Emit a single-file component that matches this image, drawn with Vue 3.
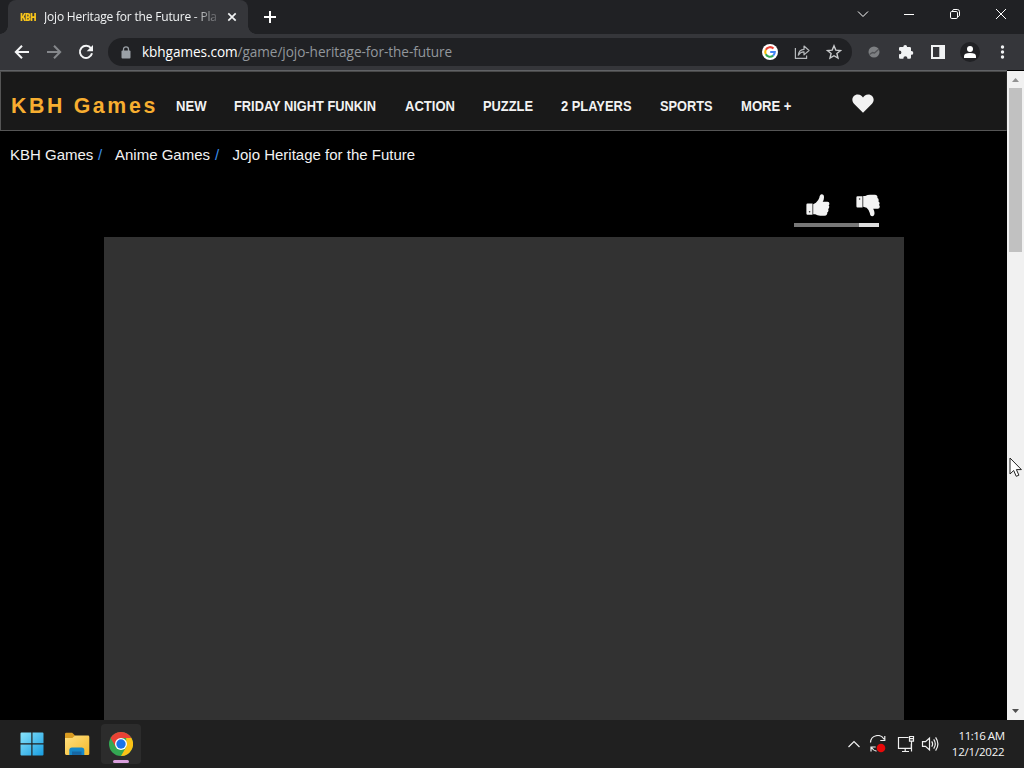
<script setup>
const nav = [
  { label: 'NEW', w: 30.5 },
  { label: 'FRIDAY NIGHT FUNKIN', w: 142 },
  { label: 'ACTION', w: 50 },
  { label: 'PUZZLE', w: 50 },
  { label: '2 PLAYERS', w: 70.5 },
  { label: 'SPORTS', w: 52.5 },
  { label: 'MORE +', w: 50.5 }
]
</script>

<template>
  <div class="desktop">
    <header class="tabs">
      <div class="tab">
        <span class="favicon">KBH</span>
        <span class="tab-title">Jojo Heritage for the Future - Pla</span>
        <svg class="tab-close" width="10" height="10" viewBox="0 0 10 10"><path d="M1.3 1.3l7.4 7.4M8.7 1.3L1.3 8.7" stroke="#f1f3f4" stroke-width="1.7" /></svg>
      </div>
      <svg class="new-tab" width="14" height="14" viewBox="0 0 14 14"><path d="M7 1v12M1 7h12" stroke="#fff" stroke-width="2" /></svg>
      <div class="window-controls">
        <svg width="12" height="12" viewBox="0 0 12 12"><path d="M1 3.5l5 5 5-5" /></svg>
        <svg width="12" height="12" viewBox="0 0 12 12"><path d="M1 6.5h10" /></svg>
        <svg width="12" height="12" viewBox="0 0 12 12"><rect x="1.5" y="3.5" width="7" height="7" rx="1.3" /><path d="M3.5 3V2.8Q3.8 1.5 5 1.5h3.3q2.2 0 2.2 2.2V7q0 1.2-1.3 1.7" /></svg>
        <svg width="12" height="12" viewBox="0 0 12 12"><path d="M1 1l10 10M11 1L1 11" /></svg>
      </div>
    </header>

    <div class="toolbar">
      <div class="history">
        <svg width="16" height="16" viewBox="0 0 16 16"><path d="M15 8H2.2M8 1.7L1.8 8 8 14.3" fill="none" stroke="#f4f5f6" stroke-width="2" /></svg>
        <svg width="16" height="16" viewBox="0 0 16 16"><path d="M1 8h12.8M8 1.7L14.2 8 8 14.3" fill="none" stroke="#85878b" stroke-width="2" /></svg>
        <svg width="16" height="16" viewBox="0 0 16 16"><path d="M13 4.3A6.1 6.1 0 1 0 14 9.3" fill="none" stroke="#f4f5f6" stroke-width="2" /><path d="M15 1v6.3H8.7z" fill="#f4f5f6" /></svg>
      </div>
      <div class="address">
        <svg class="lock" width="10" height="13" viewBox="0 0 10 13"><rect x=".5" y="4.5" width="9" height="8" rx="1" fill="#9aa0a6" /><path d="M2.5 5V3.3a2.5 2.5 0 0 1 5 0V5" fill="none" stroke="#9aa0a6" stroke-width="1.3" /></svg>
        <span class="url"><b>kbhgames.com</b>/game/jojo-heritage-for-the-future</span>
        <div class="address-icons">
          <svg width="16" height="16" viewBox="0 0 16 16"><circle cx="8" cy="8" r="8" fill="#fff" /><g fill="none" stroke-width="2.1"><path d="M11.5 4.6A4.8 4.8 0 0 0 3.8 5.7" stroke="#ea4335" /><path d="M3.8 5.7a4.8 4.8 0 0 0 0 4.6" stroke="#fbbc05" /><path d="M3.8 10.3a4.8 4.8 0 0 0 7.3 1.3" stroke="#34a853" /><path d="M11.1 11.6A4.8 4.8 0 0 0 12.8 8H8.2" stroke="#4285f4" /></g></svg>
          <svg width="16" height="16" viewBox="0 0 16 16"><g fill="none" stroke="#b5b8bb" stroke-width="1.2"><path d="M1.4 4v10.4h11.2v-3M4.3 11.2Q4.8 5.6 10 5.4V2l5 4.5-5 4.4V7.8Q6.5 7.6 4.3 11.2z" stroke-linejoin="round" /></g></svg>
          <svg width="16" height="16" viewBox="0 0 16 16"><path d="M8 1.8l1.8 4.3 4.7.4-3.6 3 1.1 4.6L8 11.7 4 14.1l1.1-4.6-3.6-3 4.7-.4z" fill="none" stroke="#c8cacc" stroke-width="1.4" /></svg>
        </div>
      </div>
      <div class="extensions">
        <svg width="16" height="16" viewBox="0 0 16 16"><circle cx="8" cy="8" r="5.5" fill="#7d7f82" /><path d="M3.5 10.5l3-2 2 .5L13 5" fill="none" stroke="#515255" stroke-width="1.3" /></svg>
        <svg width="16" height="16" viewBox="0 0 16 16"><path d="M5.3 3a1.9 1.9 0 0 1 3.8 0h2.6q1.3 0 1.3 1.3V7h.4a1.9 1.9 0 0 1 0 3.8H13v2.6q0 1.3-1.3 1.3H9.4v-.4a2 2 0 0 0-4 0v.4H2.3Q1 14.700 1 13.400V10.300h.5a1.900 1.900 0 0 0 0-3.800H1V4.300Q1 3 2.300 3z" fill="#f1f3f4" /></svg>
        <svg width="16" height="16" viewBox="0 0 16 16"><path fill-rule="evenodd" d="M1 1h14v14H1zM3 3v10h6.3V3z" fill="#f1f3f4" /></svg>
        <svg class="profile" width="20" height="20" viewBox="0 0 20 20"><circle cx="10" cy="10" r="10" fill="#202124" /><circle cx="10" cy="7" r="3" fill="#fff" /><path d="M4 16v-1.7q0-3.2 6-3.2t6 3.2V16z" fill="#fff" /></svg>
        <svg width="16" height="16" viewBox="0 0 16 16"><g fill="#f1f3f4"><circle cx="8.5" cy="3" r="1.7" /><circle cx="8.5" cy="8" r="1.7" /><circle cx="8.5" cy="13" r="1.7" /></g></svg>
      </div>
    </div>

    <div class="browser-body">
      <main class="page">
        <nav class="site-nav">
          <span class="logo">KBH Games</span>
          <svg v-for="item in nav" :key="item.label" class="nav-item" :width="item.w" height="20"><text x="0" y="15" :textLength="item.w" lengthAdjust="spacingAndGlyphs">{{ item.label }}</text></svg>
          <svg class="heart" width="22" height="19" viewBox="0 0 22 19"><path d="M11 18.7L2 9.8C-1.5 6 1 .5 5.7.5 8.5.5 10.1 2 11 3.5 11.9 2 13.5.5 16.3.5 21 .5 23.5 6 20 9.8z" fill="#f2f2f2" /></svg>
        </nav>
        <div class="breadcrumbs">
          <span class="crumb-home">KBH Games</span><i>/</i>
          <span class="crumb-anime">Anime Games</span><i>/</i>
          <span class="crumb-title">Jojo Heritage for the Future</span>
        </div>
        <div class="rating">
          <div class="thumbs">
            <svg width="24" height="23" viewBox="0 0 24 23"><path d="M1.5 9.5h5v11.2h-5Q.4 20.7.4 19.5v-8.8Q.4 9.5 1.5 9.5zM7.2 10.2l2.7-1.5Q12.8 6 13.3 3.8 13.8.3 15.7.3q2.4 0 2.3 3.1 0 2.2-1.3 4.3h4.8q2 .2 1.9 2 0 1-.8 1.6 1 .9.5 2.4-.2.9-1 1.3.7 1 .2 2.2-.3.9-1.1 1.2.3 1.1-.3 2-.7 1.3-2.5 1.3h-4.2q-2.800-.1-5-1.400H7.200z" fill="#f3f3f3" /><circle cx="3.6" cy="17.8" r=".8" fill="#333" /></svg>
            <svg width="24" height="23" viewBox="0 0 24 23"><path d="M1.500 2.200h5v11.200h-5Q.4 13.400.4 12.200V3.400Q.4 2.200 1.500 2.200zM7.200 2.100h2q2.400-1.500 5.200-1.400h4.300q1.800 0 2.500 1.400.5.8.2 1.900 1 .4 1.200 1.400.3 1.200-.2 2 .9.5 1.100 1.400.3 1.400-.5 2.200.8.7.8 1.700-.1 1.800-2 2h-4.600q1.200 2.100 1.300 4.400.1 3.100-2.300 3.100-2 0-2.400-3.200-.5-2.900-3.200-5.300l-3.400-1z" fill="#f3f3f3" /><circle cx="3.600" cy="5" r=".8" fill="#333" /></svg>
          </div>
          <div class="meter"><div class="meter-fill"></div></div>
        </div>
        <div class="game"></div>
      </main>
      <aside class="scrollbar">
        <svg width="7" height="4" viewBox="0 0 7 4"><path d="M0 4l3.5-4L7 4z" fill="#929292" /></svg>
        <div class="thumb"></div>
        <svg class="down" width="7" height="4" viewBox="0 0 7 4"><path d="M0 0l3.5 4L7 0z" fill="#505050" /></svg>
      </aside>
    </div>

    <footer class="taskbar">
      <svg class="start" width="24" height="24" viewBox="0 0 24 24"><defs><linearGradient id="win" gradientUnits="userSpaceOnUse" x1="0" y1="0" x2="24" y2="24"><stop stop-color="#8be5fb" /><stop offset="1" stop-color="#159be0" /></linearGradient></defs><path d="M1.500.5h9.800v10.800H.5V1.500q0-1 1-1zM12.500.5h10q1 0 1 1v9.800h-11zM.5 12.500h10.800v11H1.500q-1 0-1-1zM12.500 12.500h11v10q0 1-1 1h-10z" fill="url(#win)" /></svg>
      <svg class="folder" width="26" height="24" viewBox="0 0 26 24"><defs><linearGradient id="folder" x2="1" y2="1"><stop stop-color="#ffe080" /><stop offset="1" stop-color="#f5b92b" /></linearGradient></defs><path d="M1 7V2Q1 .8 2.200.8h6L11 3.500l-2 5z" fill="#d99b20" /><path d="M1 6h7.400L11 3.600h13q1.300 0 1.300 1.300v17q0 1-1.200 1H2.200Q1 22.900 1 21.600z" fill="url(#folder)" /><path d="M5.300 22.900v-4.700q0-2.700 2.700-2.700h9.600q2.700 0 2.700 2.700v4.700z" fill="#1688c8" /><path d="M8 19.500h9.500v3.400H8z" fill="#1767a4" /></svg>
      <div class="active-app">
        <svg width="24" height="24" viewBox="0 0 24 24"><circle cx="12" cy="12" r="12" fill="#34a853" /><path d="M1.600 6A12 12 0 0 1 22.400 6H12L6.800 15z" fill="#e94235" /><path d="M22.400 6A12 12 0 0 1 12 24l5.200-9V6z" fill="#fbc116" /><circle cx="12" cy="12" r="6" fill="#fff" /><circle cx="12" cy="12" r="4.700" fill="#1a73e8" /></svg>
        <div class="indicator"></div>
      </div>
      <div class="tray">
        <svg width="14" height="18" viewBox="0 0 14 18"><path d="M1.500 12L7 6.500l5.500 5.500" /></svg>
        <svg class="sync" width="18" height="18" viewBox="0 0 18 18"><path d="M1.500 7.500A7.200 7.200 0 0 1 15 4.300M15.800 1v4.500h-4.500M2 16.500V12h4.700M2.500 12.500q1.900 3.200 5 3.700" /><circle cx="12" cy="13" r="4.300" fill="#e80909" stroke="none" /></svg>
        <svg class="network" width="18" height="18" viewBox="0 0 18 18"><path d="M11.500 2.500h-10v10.800h12.800V9M5 16.500h7M8.200 13.500v3M12.500 1.500h4v4.600h-4zM14.500 6.100v10.400M12.500 3.700h4" /></svg>
        <svg class="volume" width="18" height="18" viewBox="0 0 18 18"><path d="M1.500 6.700h3l4-3.700v12l-4-3.700h-3zM10.700 6.300q1.800 2.700 0 5.400M12.700 4.400q3.200 4.600 0 9.200M14.600 2.400q4.600 6.600 0 13.200" /></svg>
        <div class="clock"><span>11:16 AM</span><span class="date">12/1/2022</span></div>
      </div>
    </footer>
    <svg class="cursor" width="14" height="21" viewBox="0 0 14 21"><path d="M1 1v16l3.700-3.500 2.500 5.800 2.700-1.100-2.500-5.600h5z" fill="#fff" stroke="#222" /></svg>
  </div>
</template>

<style>
html, body { margin: 0; background: #000; overflow: hidden; }
</style>
<style scoped>
* { box-sizing: border-box; }
svg { display: block; flex: none; }
.desktop { position: relative; width: 1024px; height: 768px; display: flex; flex-direction: column; overflow: hidden; font-family: "Open Sans", "Noto Sans", sans-serif; }
.tabs { height: 34px; background: #202124; display: flex; align-items: center; padding-left: 8px; }
.tab { position: relative; width: 240px; height: 34px; background: #35363a; border-radius: 8px 8px 0 0; display: flex; align-items: center; padding-left: 12px; }
.tab::before, .tab::after { content: ""; position: absolute; bottom: 0; width: 8px; height: 8px; }
.tab::before { left: -8px; background: radial-gradient(circle at 0 0, transparent 7.5px, #35363a 8px); }
.tab::after { right: -8px; background: radial-gradient(circle at 100% 0, transparent 7.5px, #35363a 8px); }
.favicon { width: 24px; flex: none; font: 800 10px/16px "Open Sans", sans-serif; letter-spacing: -1px; white-space: nowrap; color: #f8c51b; transform: scaleX(.86); transform-origin: left; }
.tab-title { width: 174px; flex: none; white-space: nowrap; overflow: hidden; font-size: 12px; line-height: 18px; letter-spacing: -.19px; color: #f1f3f4; mask-image: linear-gradient(90deg, #000 148px, transparent 180px); }
.tab-close { margin-left: 9px; }
.new-tab { margin-left: 15px; }
.window-controls { margin-left: auto; display: flex; gap: 34px; padding: 0 17px 6px 0; }
.window-controls svg { fill: none; stroke: #fff; stroke-width: 1; }
.toolbar { height: 36px; background: #35363a; display: flex; align-items: center; padding-left: 14px; }
.history { display: flex; gap: 16px; }
.address { width: 744px; height: 28px; margin-left: 14px; background: #202124; border-radius: 14px; display: flex; align-items: center; padding: 0 10px 0 13px; }
.url { margin-left: 11px; color: #92979c; font-size: 13.600px; line-height: 20px; letter-spacing: -.06px; white-space: nowrap; }
.url b { display: inline-block; font-weight: 400; color: #fff; }
.address-icons { display: flex; gap: 16px; margin-left: auto; }
.extensions { display: flex; align-items: center; gap: 16px; margin-left: 14px; }
.extensions .profile { margin: 0 -2px; }
.browser-body { height: 650px; display: flex; background: #000; }
.page { width: 1007px; border-top: 1px solid #606265; display: flex; flex-direction: column; font-family: "Liberation Sans", Arial, sans-serif; }
.site-nav { height: 60px; flex: none; background: #191919; border: 1px solid #555; border-top-color: #484848; border-right-color: #252525; display: flex; align-items: center; padding: 10px 0 0 10px; }
.logo { width: 164.500px; flex: none; color: #f7ae30; font-size: 21.300px; line-height: 24px; font-weight: 700; letter-spacing: 2.650px; white-space: nowrap; }
.nav-item { overflow: visible; margin-right: 28.300px; fill: #f2f2f2; font: 700 14px "Liberation Sans", Arial, sans-serif; }
.heart { margin: -5px 0 0 32.500px; }
.breadcrumbs { height: 47px; flex: none; display: flex; align-items: center; padding-left: 10px; color: #f2f2f2; font-size: 15px; line-height: 20px; white-space: nowrap; }
.breadcrumbs i { font-style: normal; color: #3b8eea; width: 17px; }
.crumb-home { width: 88px; }
.crumb-anime { width: 100px; }
.crumb-title { margin-left: .5px; }
.rating { width: 86px; height: 59px; flex: none; margin-left: 794px; padding-top: 16px; }
.thumbs { display: flex; gap: 26px; padding-left: 12px; }
.meter { width: 85px; height: 4px; margin-top: 6px; background: #ddd; }
.meter-fill { width: 65px; height: 4px; background: #777; }
.game { width: 800px; flex: 1; margin-left: 104px; background: #323232; }
.scrollbar { width: 17px; background: #f1f1f1; display: flex; flex-direction: column; align-items: center; padding: 7px 0; margin-top: 1px; }
.thumb { width: 13px; height: 164px; margin-top: 6px; background: #c1c1c1; }
.down { margin-top: auto; }
.taskbar { height: 48px; background: #202020; display: flex; align-items: center; padding-left: 20px; }
.folder { margin-left: 20px; }
.active-app { width: 40px; height: 40px; margin-left: 11px; background: #2c2c2c; border-radius: 4px; display: flex; flex-direction: column; align-items: center; padding-top: 8px; }
.indicator { width: 16px; height: 3px; margin-top: 4px; border-radius: 2px; background: #d99fdd; }
.tray { margin-left: auto; padding-right: 19px; height: 48px; display: flex; align-items: center; color: #f5f5f5; }
.tray svg { fill: none; stroke: #f0f0f0; stroke-width: 1.2; }
.sync { margin-left: 8px; }
.network { margin-left: 10px; }
.volume { margin-left: 6px; }
.clock { margin-left: 13px; display: flex; flex-direction: column; align-items: flex-end; font-size: 11.500px; line-height: 16px; letter-spacing: -.5px; white-space: nowrap; }
.clock span { margin-right: .5px; }
.clock .date { letter-spacing: -.2px; }
.cursor { position: absolute; left: 1008.500px; top: 457px; }
</style>
